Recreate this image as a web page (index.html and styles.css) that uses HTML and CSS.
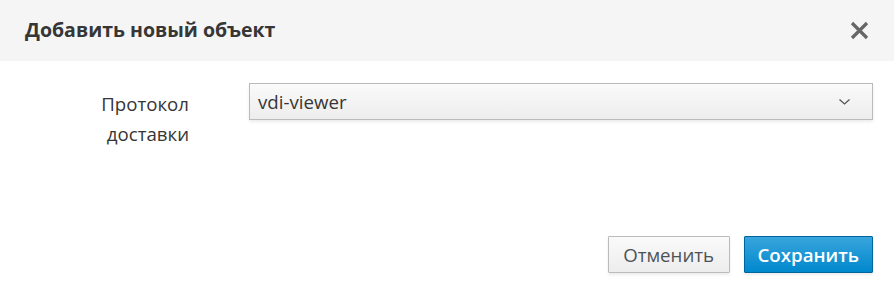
FILE: index.html
```html
<!DOCTYPE html>
<html lang="ru">
<head>
<meta charset="utf-8">
<link rel="stylesheet" href="styles.css">
</head>
<body>
<div class="modal">
  <div class="modal-header">
    <h4 class="modal-title">Добавить новый объект</h4>
    <button class="close" aria-label="Закрыть">
      <svg width="19" height="19" viewBox="0 0 19 19"><path d="M2 2 L17 17 M17 2 L2 17" stroke="#666" stroke-width="3.2" fill="none"/></svg>
    </button>
  </div>
  <div class="modal-body">
    <div class="form-row">
      <label class="form-label">Протокол<br>доставки</label>
      <div class="select">
        <span class="select-value">vdi-viewer</span>
        <svg class="caret" width="11" height="6" viewBox="0 0 11 6"><path d="M0.5 0.5 L5.5 5 L10.5 0.5" stroke="#555" stroke-width="1.3" fill="none"/></svg>
      </div>
    </div>
  </div>
  <div class="modal-footer">
    <button class="btn btn-default">Отменить</button>
    <button class="btn btn-primary">Сохранить</button>
  </div>
</div>
</body>
</html>
```
FILE: styles.css
```css
html, body {
  margin: 0;
  padding: 0;
  background: #fff;
}
body {
  font-family: "Open Sans", "Noto Sans", sans-serif;
  color: #363636;
  width: 894px;
  height: 294px;
  overflow: hidden;
}
.modal {
  display: flex;
  flex-direction: column;
  height: 294px;
}
.modal-header {
  height: 61px;
  box-sizing: border-box;
  background: #f5f5f5;
  display: flex;
  align-items: center;
  justify-content: space-between;
  padding: 0 25px 0 25px;
}
.modal-title {
  margin: 0;
  font-size: 19.5px;
  font-weight: 700;
  color: #363636;
  padding-bottom: 2px;
}
.close {
  border: none;
  background: transparent;
  padding: 0;
  width: 19px;
  height: 19px;
  display: flex;
  cursor: pointer;
}
.modal-body {
  padding: 22px 21px 0 0;
  flex: 1;
}
.form-row {
  display: flex;
  align-items: flex-start;
}
.form-label {
  width: 189px;
  text-align: right;
  font-size: 18.67px;
  line-height: 30px;
  color: #363636;
  padding-top: 6px;
  margin-right: 60px;
}
.select {
  flex: 1;
  height: 37px;
  box-sizing: border-box;
  border: 1px solid #bbb;
  background: linear-gradient(#fafafa, #ededed);
  box-shadow: 0 2px 3px rgba(3, 3, 3, 0.08);
  display: flex;
  align-items: center;
  justify-content: space-between;
  padding: 0 22px 0 8px;
}
.select-value {
  font-size: 18.67px;
  color: #363636;
}
.modal-footer {
  display: flex;
  justify-content: flex-end;
  gap: 14px;
  padding: 0 21px 21px 0;
}
.btn {
  height: 37px;
  box-sizing: border-box;
  font-family: "Open Sans", "Noto Sans", sans-serif;
  font-size: 18.67px;
  border-radius: 1px;
  cursor: pointer;
}
.btn-default {
  padding: 0 14.5px;
  border: 1px solid #bbb;
  background: linear-gradient(#fafafa, #ededed);
  color: #4d5258;
  font-weight: 400;
  box-shadow: 0 2px 3px rgba(3, 3, 3, 0.08);
}
.btn-primary {
  padding: 0 13px;
  border: 1px solid #00659c;
  background: linear-gradient(#39a5dc, #0088ce);
  color: #fff;
  font-weight: 600;
  box-shadow: 0 2px 3px rgba(3, 3, 3, 0.08);
}
```
